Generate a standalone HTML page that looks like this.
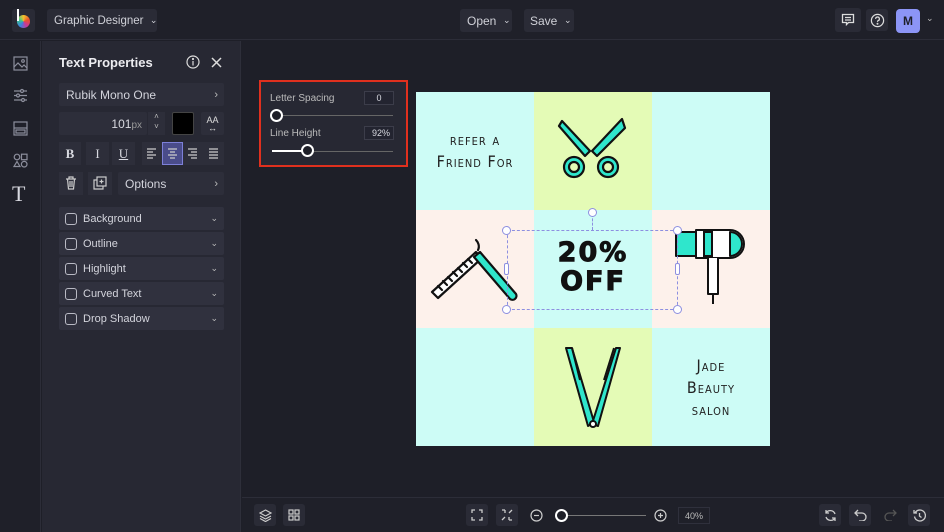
<!DOCTYPE html><html><head><meta charset="utf-8"><style>
*{box-sizing:border-box;margin:0;padding:0}
body{width:944px;height:532px;background:#1e1f28;font-family:"Liberation Sans",sans-serif;color:#d8d9e0;position:relative;overflow:hidden;font-size:11px}
.a{position:absolute}
.btn{position:absolute;background:#2a2b36;border-radius:3px;color:#d0d1d8;font-size:12px;display:flex;align-items:center;white-space:nowrap}
.row{position:absolute;left:59px;width:165px;height:23px;background:#30313e;border-radius:2px;display:flex;align-items:center;font-size:11px;color:#d3d4dc}
.cb{width:12px;height:12px;border:1.5px solid #b9bac4;border-radius:3px;margin:0 6px 0 6px}
.chev{position:absolute;right:6px;font-size:9px;color:#bbb}
.sq{position:absolute;width:22px;height:22px;border-radius:3px;background:#2a2b36;display:flex;align-items:center;justify-content:center}
.cell{position:absolute;width:118px;height:118px}
.hand{position:absolute;width:9px;height:9px;border:1px solid #8d8fe0;border-radius:50%;background:#fff}
.dec{font-family:"DejaVu Sans Condensed","DejaVu Sans",sans-serif;color:#222;text-align:center;font-size:16px;line-height:22px;letter-spacing:1px;font-variant:small-caps}
</style></head><body>
<div class="a" style="left:0;top:0;width:944px;height:40px;background:#1f2029;border-bottom:1px solid #2c2d38"></div>
<div class="a" style="left:12px;top:9px;width:23px;height:23px;background:#2a2b36;border-radius:3px"></div>
<div class="a" style="left:17px;top:15px;width:13px;height:13px;border-radius:50%;background:conic-gradient(#f4c22b,#e8502f,#c8379b,#3c7fe0,#3cc48c,#f4c22b)"></div>
<div class="a" style="left:17px;top:9px;width:2px;height:12px;background:#fff"></div>
<div class="btn" style="left:47px;top:9px;width:110px;height:23px;padding-left:7px;font-size:11.5px">Graphic Designer&nbsp;&nbsp;<span style="font-size:9px">⌄</span></div>
<div class="btn" style="left:460px;top:9px;width:52px;height:23px;padding-left:7px">Open&nbsp;&nbsp;<span style="font-size:9px">⌄</span></div>
<div class="btn" style="left:524px;top:9px;width:50px;height:23px;padding-left:6px">Save&nbsp;&nbsp;<span style="font-size:9px">⌄</span></div>
<div class="sq" style="left:835px;top:8px;width:26px;height:24px"><svg width="14" height="14" viewBox="0 0 14 14" fill="none" stroke="#ddd" stroke-width="1.3"><path d="M1.5 1.5h11v8h-5l-2 2v-2h-4z M4 4.5h6M4 7h6"/></svg></div>
<div class="sq" style="left:866px;top:9px"><svg width="15" height="15" viewBox="0 0 16 16" fill="none" stroke="#ddd" stroke-width="1.3"><circle cx="8" cy="8" r="6.5"/><path d="M6 6.3a2 2 0 1 1 2.5 1.9c-.5.2-.5.6-.5 1.3"/><circle cx="8" cy="11.5" r=".4" fill="#ddd"/></svg></div>
<div class="a" style="left:896px;top:9px;width:24px;height:24px;background:#8c95f6;border-radius:4px;color:#1e1f28;font-weight:bold;font-size:12px;display:flex;align-items:center;justify-content:center">M</div>
<div class="a" style="left:926px;top:13px;font-size:9px;color:#bbb">⌄</div>
<div class="a" style="left:0;top:41px;width:41px;height:491px;background:#1f2029;border-right:1px solid #2c2d38"></div>
<svg class="a" style="left:13px;top:56px" width="15" height="15" fill="none" stroke="#8c8e9c" stroke-width="1.2"><rect x="1" y="1" width="13" height="13"/><path d="M1 11l4-4 4 4 2-2 3 3"/><circle cx="10" cy="5" r="1.3"/></svg>
<svg class="a" style="left:13px;top:88px" width="15" height="15" fill="none" stroke="#8c8e9c" stroke-width="1.2"><path d="M1 3h13M1 7.5h13M1 12h13"/><circle cx="9" cy="3" r="1.5" fill="#1f2029"/><circle cx="5" cy="7.5" r="1.5" fill="#1f2029"/><circle cx="10" cy="12" r="1.5" fill="#1f2029"/></svg>
<svg class="a" style="left:13px;top:121px" width="15" height="15" fill="none" stroke="#8c8e9c" stroke-width="1.2"><rect x="1" y="1" width="13" height="13"/><path d="M1 7h13"/><rect x="3" y="9" width="9" height="3"/></svg>
<svg class="a" style="left:13px;top:153px" width="15" height="15" fill="none" stroke="#8c8e9c" stroke-width="1.2"><circle cx="4" cy="4" r="2.8"/><rect x="8.5" y="1.2" width="5.5" height="5.5"/><path d="M4 8.5l3 5H1z"/><circle cx="11.2" cy="11.2" r="2.8"/></svg>
<div class="a" style="left:12px;top:181px;font-family:'Liberation Serif',serif;font-size:22px;color:#d8d9e0">T</div>
<div class="a" style="left:42px;top:41px;width:199px;height:491px;background:#272833;border-right:1px solid #2e2f3a"></div>
<div class="a" style="left:59px;top:55px;font-size:13px;font-weight:bold;color:#ececf0">Text Properties</div>
<svg class="a" style="left:186px;top:55px" width="14" height="14" fill="none" stroke="#ddd" stroke-width="1.2"><circle cx="7" cy="7" r="6"/><path d="M7 6v4.5"/><circle cx="7" cy="4" r=".5" fill="#ddd"/></svg>
<svg class="a" style="left:211px;top:57px" width="11" height="11" stroke="#ddd" stroke-width="1.5"><path d="M1 1l9 9M10 1l-9 9"/></svg>
<div class="row" style="top:83px;background:#2d2e3a;padding-left:7px;font-size:12px">Rubik Mono One<span class="chev" style="font-size:11px">›</span></div>
<div class="a" style="left:59px;top:112px;width:88px;height:23px;background:#2d2e3a;border-radius:2px;text-align:right;padding:5px 5px 0 0;font-size:12px">101<span style="color:#999;font-size:10px">px</span></div>
<div class="a" style="left:148px;top:112px;width:17px;height:23px;background:#2d2e3a;font-size:8px;text-align:center;color:#bbb;line-height:10px">˄<br>˅</div>
<div class="a" style="left:172px;top:112px;width:22px;height:23px;background:#000;border:1px solid #444;border-radius:2px"></div>
<div class="a" style="left:201px;top:112px;width:23px;height:23px;background:#2d2e3a;border-radius:2px;font-size:9px;text-align:center;padding-top:4px;line-height:8px;color:#ddd">AA<br>↔</div>
<div class="a" style="left:59px;top:142px;width:22px;height:23px;background:#2d2e3a;font-family:'Liberation Serif';font-weight:bold;font-size:13px;text-align:center;padding-top:4px">B</div>
<div class="a" style="left:86px;top:142px;width:23px;height:23px;background:#2d2e3a;font-family:'Liberation Serif';font-size:13px;text-align:center;padding-top:4px">I</div>
<div class="a" style="left:112px;top:142px;width:23px;height:23px;background:#2d2e3a;font-family:'Liberation Serif';font-size:13px;text-align:center;padding-top:4px;text-decoration:underline">U</div>
<div class="a" style="left:142px;top:142px;width:82px;height:23px;background:#2d2e3a"></div>
<div class="a" style="left:162px;top:142px;width:21px;height:23px;background:#4a4c8a;border:1px solid #7d80d8"></div>
<svg class="a" style="left:146px;top:147px" width="76" height="13" stroke="#ccc" stroke-width="1.2"><path d="M1 2h9M1 5h6M1 8h9M1 11h6 M22 2h9M24 5h5M22 8h9M24 11h5 M42 2h9M45 5h6M42 8h9M45 11h6 M63 2h9M63 5h9M63 8h9M63 11h9"/></svg>
<div class="a" style="left:59px;top:172px;width:24px;height:23px;background:#2d2e3a"></div>
<svg class="a" style="left:65px;top:176px" width="12" height="14" fill="none" stroke="#ccc" stroke-width="1.2"><path d="M1 3h10M4 3V1h4v2M2.5 3l1 10h5l1-10M5 5v6M7 5v6"/></svg>
<div class="a" style="left:88px;top:172px;width:24px;height:23px;background:#2d2e3a"></div>
<svg class="a" style="left:93px;top:176px" width="14" height="14" fill="none" stroke="#ccc" stroke-width="1.2"><rect x="4" y="1" width="9" height="9"/><path d="M4 4H1v9h9v-3M8.5 3.5v4M6.5 5.5h4"/></svg>
<div class="row" style="left:118px;width:106px;top:172px;background:#2d2e3a;padding-left:7px;font-size:12px">Options<span class="chev" style="font-size:11px">›</span></div>
<div class="row" style="top:207px"><div class="cb"></div>Background<span class="chev">⌄</span></div>
<div class="row" style="top:232px"><div class="cb"></div>Outline<span class="chev">⌄</span></div>
<div class="row" style="top:257px"><div class="cb"></div>Highlight<span class="chev">⌄</span></div>
<div class="row" style="top:282px"><div class="cb"></div>Curved Text<span class="chev">⌄</span></div>
<div class="row" style="top:307px"><div class="cb"></div>Drop Shadow<span class="chev">⌄</span></div>
<div class="a" style="left:259px;top:80px;width:149px;height:87px;background:#272833;border:2px solid #e0301e"></div>
<div class="a" style="left:270px;top:93px;font-size:10px;color:#bbb">Letter Spacing</div>
<div class="a" style="left:364px;top:91px;width:30px;height:14px;border:1px solid #3c3d4a;font-size:9px;text-align:center;padding-top:1px;background:#232430">0</div>
<div class="a" style="left:272px;top:115px;width:121px;height:1px;background:#666"></div>
<div class="a" style="left:270px;top:109px;width:13px;height:13px;border-radius:50%;background:#1e1f28;border:2px solid #fff"></div>
<div class="a" style="left:270px;top:128px;font-size:10px;color:#bbb">Line Height</div>
<div class="a" style="left:364px;top:126px;width:30px;height:14px;border:1px solid #3c3d4a;font-size:9px;text-align:right;padding:1px 3px 0 0;background:#232430">92%</div>
<div class="a" style="left:272px;top:151px;width:121px;height:1px;background:#666"></div>
<div class="a" style="left:272px;top:150px;width:34px;height:2px;background:#fff"></div>
<div class="a" style="left:301px;top:144px;width:13px;height:13px;border-radius:50%;background:#1e1f28;border:2px solid #fff"></div>
<div class="cell" style="left:416px;top:92px;background:#cdfcf6"></div>
<div class="cell" style="left:534px;top:92px;background:#e4fbb6"></div>
<div class="cell" style="left:652px;top:92px;width:118px;background:#cdfcf6"></div>
<div class="cell" style="left:416px;top:210px;background:#fdf1eb"></div>
<div class="cell" style="left:534px;top:210px;background:#cdfcf6"></div>
<div class="cell" style="left:652px;top:210px;background:#fdf1eb"></div>
<div class="cell" style="left:416px;top:328px;background:#cdfcf6"></div>
<div class="cell" style="left:534px;top:328px;background:#e4fbb6"></div>
<div class="cell" style="left:652px;top:328px;background:#cdfcf6"></div>
<div class="a dec" style="left:416px;top:129px;width:118px">refer a<br>Friend For</div>
<div class="a dec" style="left:652px;top:355px;width:118px">Jade<br>Beauty<br>salon</div>
<div class="a" style="left:534px;top:238px;width:118px;text-align:center;font-family:'DejaVu Sans',sans-serif;font-weight:900;font-size:27px;line-height:29px;color:#111;letter-spacing:2px;-webkit-text-stroke:1px #111">20%<br>OFF</div>
<svg class="a" style="left:556px;top:115px" width="72" height="72" fill="#2fe6cc" stroke="#111" stroke-width="2.2" stroke-linejoin="round"><path d="M6 6l28 30 -5 5 -26 -30z"/><path d="M66 4l-30 32 5 5 28-28z"/><circle cx="18" cy="52" r="10"/><circle cx="18" cy="52" r="5" fill="#e4fbb6"/><circle cx="52" cy="52" r="10"/><circle cx="52" cy="52" r="5" fill="#e4fbb6"/></svg>
<svg class="a" style="left:430px;top:238px" width="92" height="66" fill="none" stroke="#111" stroke-width="2.2" stroke-linecap="round" stroke-linejoin="round"><path d="M2 54l44-40 6 6 -44 40z" fill="#fff"/><path d="M8 48l4 4M13 43l4 4M18 39l4 4M23 34l4 4M28 30l4 4M33 25l4 4M38 21l4 4"/><path d="M50 14l36 42a4 4 0 0 1-6 5l-36-42z" fill="#2fe6cc"/><path d="M48 12c2-4 0-8-2-10"/></svg>
<svg class="a" style="left:674px;top:228px" width="74" height="78" stroke="#111" stroke-width="2" fill="none" stroke-linejoin="round"><path d="M2 4h20v24H2z" fill="#2fe6cc"/><path d="M22 2h34a14 14 0 0 1 0 28H22z" fill="#fff"/><path d="M30 2v28M38 2v28" /><path d="M30 4h8v24h-8z" fill="#2fe6cc"/><path d="M56 4a12 12 0 0 1 0 24z" fill="#2fe6cc"/><path d="M34 30v36h10V30" fill="#fff"/><path d="M39 66v10"/></svg>
<svg class="a" style="left:562px;top:344px" width="62" height="88" stroke="#111" stroke-width="2" fill="none" stroke-linejoin="round"><path d="M4 4l6 0 22 74 -6 4z" fill="#2fe6cc"/><path d="M58 4l-4 0 -24 76 6 2z" fill="#2fe6cc"/><path d="M10 4l8 32M52 4l-10 32"/><circle cx="31" cy="80" r="3" fill="#fff"/></svg>
<div class="a" style="left:507px;top:230px;width:171px;height:80px;border:1px dashed #8d8fe0"></div>
<div class="a" style="left:592px;top:214px;width:0;height:16px;border-left:1px dashed #8d8fe0"></div>
<div class="hand" style="left:588px;top:208px"></div>
<div class="hand" style="left:502px;top:226px"></div><div class="hand" style="left:673px;top:226px"></div>
<div class="hand" style="left:502px;top:305px"></div><div class="hand" style="left:673px;top:305px"></div>
<div class="a" style="left:504px;top:263px;width:5px;height:12px;border:1px solid #8d8fe0;background:#fff;border-radius:2px"></div>
<div class="a" style="left:675px;top:263px;width:5px;height:12px;border:1px solid #8d8fe0;background:#fff;border-radius:2px"></div>
<div class="a" style="left:242px;top:497px;width:702px;height:35px;background:#1f2029;border-top:1px solid #2c2d38"></div>
<div class="sq" style="left:254px;top:504px"><svg width="13" height="13" fill="none" stroke="#ccc" stroke-width="1.2"><path d="M6.5 1l5.5 3-5.5 3-5.5-3z M1 7l5.5 3 5.5-3M1 9.5l5.5 3 5.5-3"/></svg></div>
<div class="sq" style="left:283px;top:504px"><svg width="12" height="12" fill="none" stroke="#ccc" stroke-width="1.2"><rect x="1" y="1" width="4" height="4"/><rect x="7" y="1" width="4" height="4"/><rect x="1" y="7" width="4" height="4"/><rect x="7" y="7" width="4" height="4"/></svg></div>
<div class="sq" style="left:466px;top:504px"><svg width="12" height="12" fill="none" stroke="#ccc" stroke-width="1.3"><path d="M1 4V1h3M8 1h3v3M11 8v3H8M4 11H1V8"/></svg></div>
<div class="sq" style="left:496px;top:504px"><svg width="12" height="12" fill="none" stroke="#ccc" stroke-width="1.3"><path d="M1 1h3M8 4l3-3M1 11l3-3M8 11h3M4 4V1M8 8v3"/></svg></div>
<svg class="a" style="left:530px;top:509px" width="13" height="13" fill="none" stroke="#ccc" stroke-width="1.2"><circle cx="6.5" cy="6.5" r="5.5"/><path d="M4 6.5h5"/></svg>
<div class="a" style="left:558px;top:515px;width:88px;height:1px;background:#777"></div>
<div class="a" style="left:555px;top:509px;width:13px;height:13px;border-radius:50%;background:#1f2029;border:2px solid #fff"></div>
<svg class="a" style="left:654px;top:509px" width="13" height="13" fill="none" stroke="#ccc" stroke-width="1.2"><circle cx="6.5" cy="6.5" r="5.5"/><path d="M4 6.5h5M6.5 4v5"/></svg>
<div class="a" style="left:678px;top:507px;width:32px;height:17px;border:1px solid #2f303c;font-size:9px;text-align:center;padding-top:3px;color:#bbb">40%</div>
<div class="sq" style="left:819px;top:504px"><svg width="13" height="13" fill="none" stroke="#ccc" stroke-width="1.3"><path d="M11 5A5 5 0 0 0 2 4M2 8a5 5 0 0 0 9 1M2 1v3h3M11 12V9H8"/></svg></div>
<div class="sq" style="left:849px;top:504px"><svg width="13" height="12" fill="none" stroke="#ccc" stroke-width="1.3"><path d="M4 1L1 4l3 3M1 4h7a4 4 0 0 1 0 8H5"/></svg></div>
<svg class="a" style="left:884px;top:509px" width="13" height="12" fill="none" stroke="#555" stroke-width="1.3"><path d="M9 1l3 3-3 3M12 4H5a4 4 0 0 0 0 8h3"/></svg>
<div class="sq" style="left:908px;top:504px"><svg width="13" height="13" fill="none" stroke="#ccc" stroke-width="1.3"><path d="M2 4a5.5 5.5 0 1 1-.5 3.5M1 1v3h3M6.5 4v3l2 1.5"/></svg></div>
</body></html>
